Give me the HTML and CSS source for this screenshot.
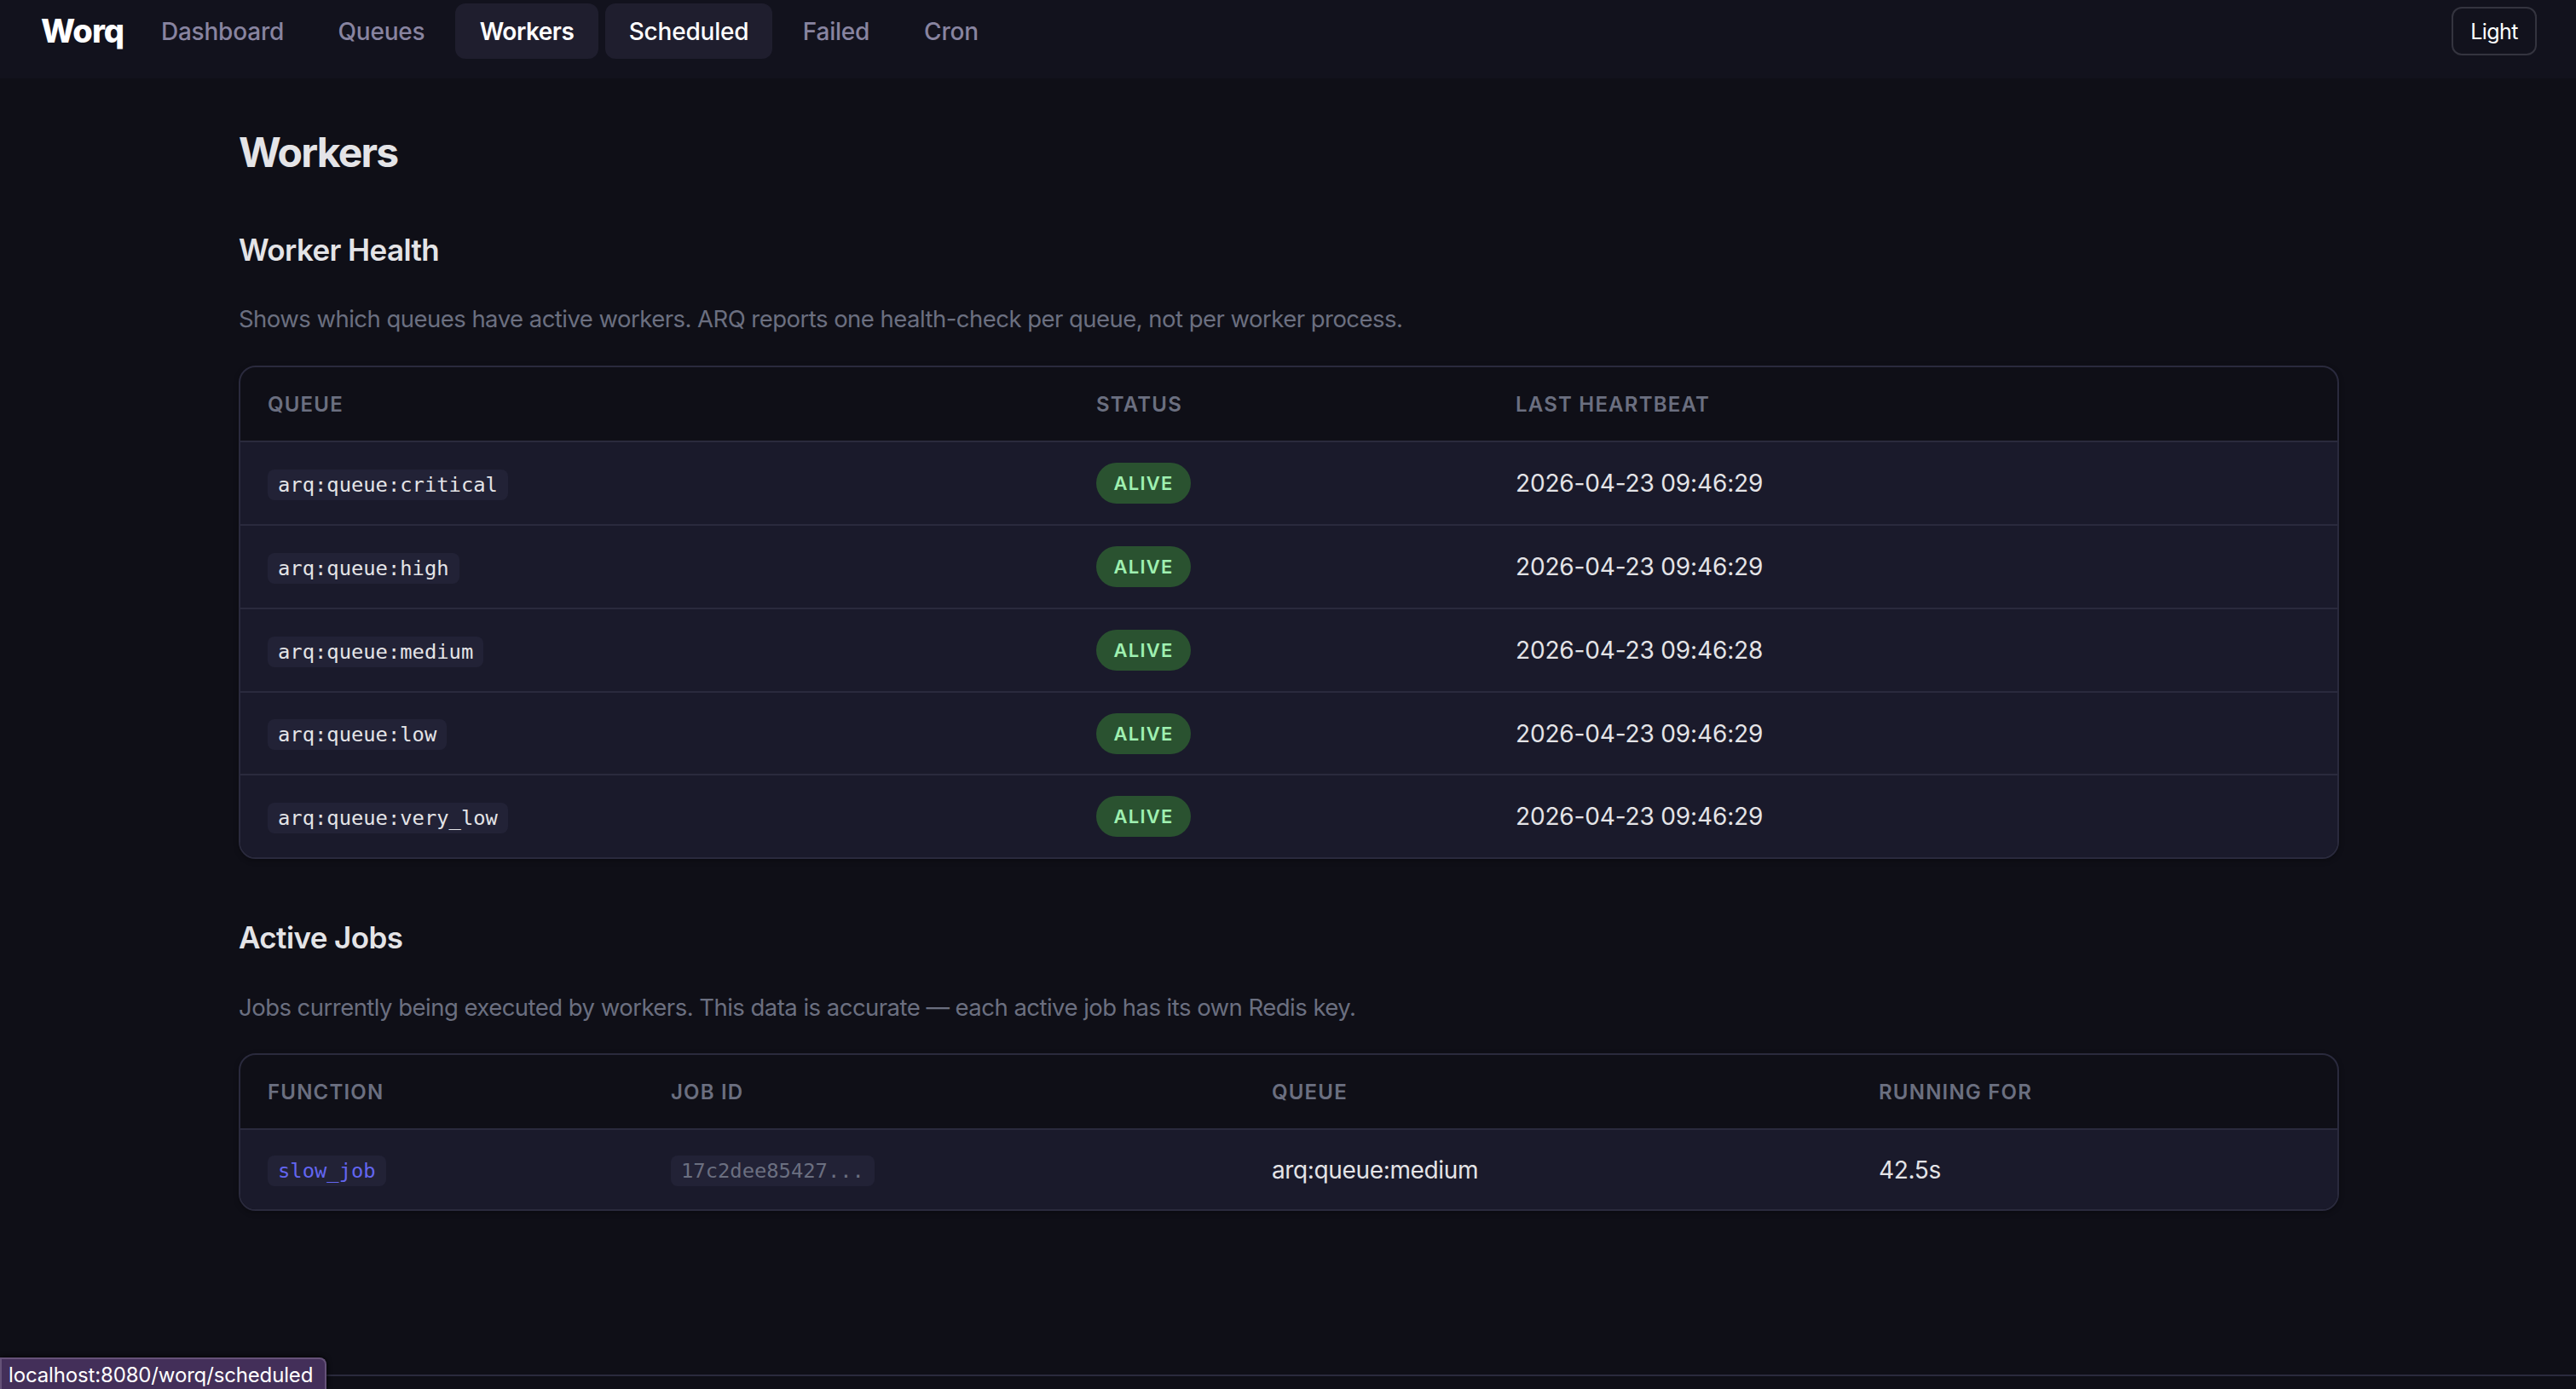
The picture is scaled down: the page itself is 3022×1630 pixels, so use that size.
FILE: index.html
```html
<!DOCTYPE html>
<html lang="en">
<head>
  <meta charset="UTF-8">
  <meta name="viewport" content="width=device-width, initial-scale=1.0">
  <title>Workers - Worq</title>
  <link rel="stylesheet" href="styles.css">
</head>
<body>
  <header class="topbar">
    <a class="logo" href="#">Worq</a>
    <nav class="nav">
      <a href="#">Dashboard</a>
      <a href="#">Queues</a>
      <a href="#" class="active">Workers</a>
      <a href="#" class="hover">Scheduled</a>
      <a href="#">Failed</a>
      <a href="#">Cron</a>
    </nav>
    <button class="theme-toggle">Light</button>
  </header>

  <main class="container">
    <h1>Workers</h1>

    <h2>Worker Health</h2>
    <p class="hint">Shows which queues have active workers. ARQ reports one health-check per queue, not per worker process.</p>
    <div class="table-wrap">
      <table class="health">
        <thead>
          <tr><th class="col-queue">Queue</th><th class="col-status">Status</th><th>Last Heartbeat</th></tr>
        </thead>
        <tbody>
          <tr><td><code>arq:queue:critical</code></td><td><span class="badge">Alive</span></td><td>2026-04-23 09:46:29</td></tr>
          <tr><td><code>arq:queue:high</code></td><td><span class="badge">Alive</span></td><td>2026-04-23 09:46:29</td></tr>
          <tr><td><code>arq:queue:medium</code></td><td><span class="badge">Alive</span></td><td>2026-04-23 09:46:28</td></tr>
          <tr><td><code>arq:queue:low</code></td><td><span class="badge">Alive</span></td><td>2026-04-23 09:46:29</td></tr>
          <tr><td><code>arq:queue:very_low</code></td><td><span class="badge">Alive</span></td><td>2026-04-23 09:46:29</td></tr>
        </tbody>
      </table>
    </div>

    <h2>Active Jobs</h2>
    <p class="hint jobs-hint">Jobs currently being executed by workers. This data is accurate — each active job has its own Redis key.</p>
    <div class="table-wrap">
      <table class="jobs">
        <thead>
          <tr><th class="col-function">Function</th><th class="col-id">Job ID</th><th class="col-jobqueue">Queue</th><th>Running For</th></tr>
        </thead>
        <tbody>
          <tr><td><a href="#"><code class="link">slow_job</code></a></td><td><code class="muted">17c2dee85427...</code></td><td>arq:queue:medium</td><td>42.5s</td></tr>
        </tbody>
      </table>
    </div>
  </main>

  <footer class="footer"></footer>
  <div class="status-bar">localhost:8080/worq/scheduled</div>
</body>
</html>
```
FILE: styles.css
```css
* {
  box-sizing: border-box;
}
body {
  margin: 0;
  height: 1630px;
  overflow: hidden;
  display: flex;
  flex-direction: column;
  background: #0f0f17;
  color: #e4e4e7;
  font-family: Inter, sans-serif;
  font-size: 28px;
}
a {
  color: inherit;
  text-decoration: none;
}

/* top bar */
.topbar {
  display: flex;
  align-items: center;
  height: 92px;
  flex: none;
  padding: 4px 46px 23px 48px;
  background: #12121d;
}
.logo {
  width: 113px;
  padding-bottom: 1px;
  color: #fff;
  font-size: 38px;
  font-weight: 800;
  letter-spacing: -1px;
}
.nav {
  display: grid;
  grid-template-columns: 200px 157px 168px 196px 134px 120px;
  gap: 8px;
}
.nav a {
  height: 65px;
  line-height: 66px;
  text-align: center;
  border-radius: 12px;
  color: #8884a0;
  font-weight: 500;
  letter-spacing: -0.2px;
}
.nav .active,
.nav .hover {
  background: #1f1e2e;
  color: #fff;
}
.nav .active {
  font-weight: 600;
  letter-spacing: -0.5px;
}
.theme-toggle {
  margin-left: auto;
  width: 100px;
  height: 57px;
  padding: 0;
  border: 2px solid #34343f;
  border-radius: 12px;
  background: transparent;
  color: #fff;
  font-family: inherit;
  font-size: 25px;
  letter-spacing: -0.6px;
}

/* content */
.container {
  width: 2464px;
  margin: 0 0 0 280px;
  flex: 1;
}
h1 {
  margin: 58px 0 64px;
  font-size: 48px;
  line-height: 58px;
  font-weight: 700;
  letter-spacing: -1.8px;
}
h2 {
  margin: 71px 0 38px;
  font-size: 35px;
  line-height: 42px;
  font-weight: 600;
  letter-spacing: -0.6px;
}
h1 + h2 {
  margin-top: 0;
}
.hint {
  margin: 0 0 33px;
  color: #6b6f80;
  font-size: 27.5px;
  line-height: 44px;
  letter-spacing: -0.53px;
}
.jobs-hint {
  margin: 39px 0 32px;
}
.table-wrap {
  border: 2px solid #2a2a3d;
  border-radius: 20px;
  overflow: hidden;
  box-shadow: 0 2px 6px rgba(0, 0, 0, 0.3);
}
table {
  width: 100%;
  table-layout: fixed;
  border-collapse: separate;
  border-spacing: 0;
}
th, td {
  padding: 0 0 0 32px;
  text-align: left;
  vertical-align: middle;
  border-bottom: 2px solid #2a2a3d;
}
th {
  height: 88px;
  color: #6b6f80;
  font-size: 24px;
  font-weight: 600;
  letter-spacing: 1.2px;
  text-transform: uppercase;
}
td {
  height: 98px;
  background: #1a1a2b;
  letter-spacing: -0.15px;
}
tr:nth-child(4) td {
  height: 97px;
}
tbody tr:last-child td {
  height: 96px;
  border-bottom: none;
}
.jobs tbody tr:last-child td {
  height: 93px;
  letter-spacing: -0.36px;
}
.col-queue { width: 972px; }
.col-status { width: 492px; }
.col-function { width: 473px; }
.col-id { width: 705px; }
.col-jobqueue { width: 712px; }

code {
  display: inline-block;
  height: 36px;
  margin-top: 3px;
  padding: 0 12px;
  border-radius: 8px;
  background: #222236;
  font-family: "DejaVu Sans Mono", monospace;
  font-size: 23.8px;
  line-height: 36px;
  letter-spacing: 0;
  vertical-align: middle;
}
.link {
  color: #6366f1;
}
.muted {
  color: #6b6f80;
}
.badge {
  display: inline-block;
  width: 111px;
  height: 48px;
  border-radius: 24px;
  background: #2a5230;
  color: #9ff0b0;
  font-size: 22px;
  font-weight: 600;
  line-height: 48px;
  letter-spacing: 1.2px;
  text-align: center;
  text-transform: uppercase;
  vertical-align: middle;
}

.footer {
  height: 17px;
  flex: none;
  border-top: 2px solid #2a2a3d;
}

/* link preview over the page corner */
.status-bar {
  position: absolute;
  left: 0;
  bottom: 0;
  width: 383px;
  height: 37px;
  padding-left: 8px;
  border: 2px solid #655278;
  border-bottom: none;
  border-radius: 0 8px 0 0;
  background: #432f59;
  box-shadow: 0 0 6px #000;
  color: #fff;
  font-size: 24px;
  line-height: 38px;
  letter-spacing: -0.15px;
  white-space: nowrap;
}
```
